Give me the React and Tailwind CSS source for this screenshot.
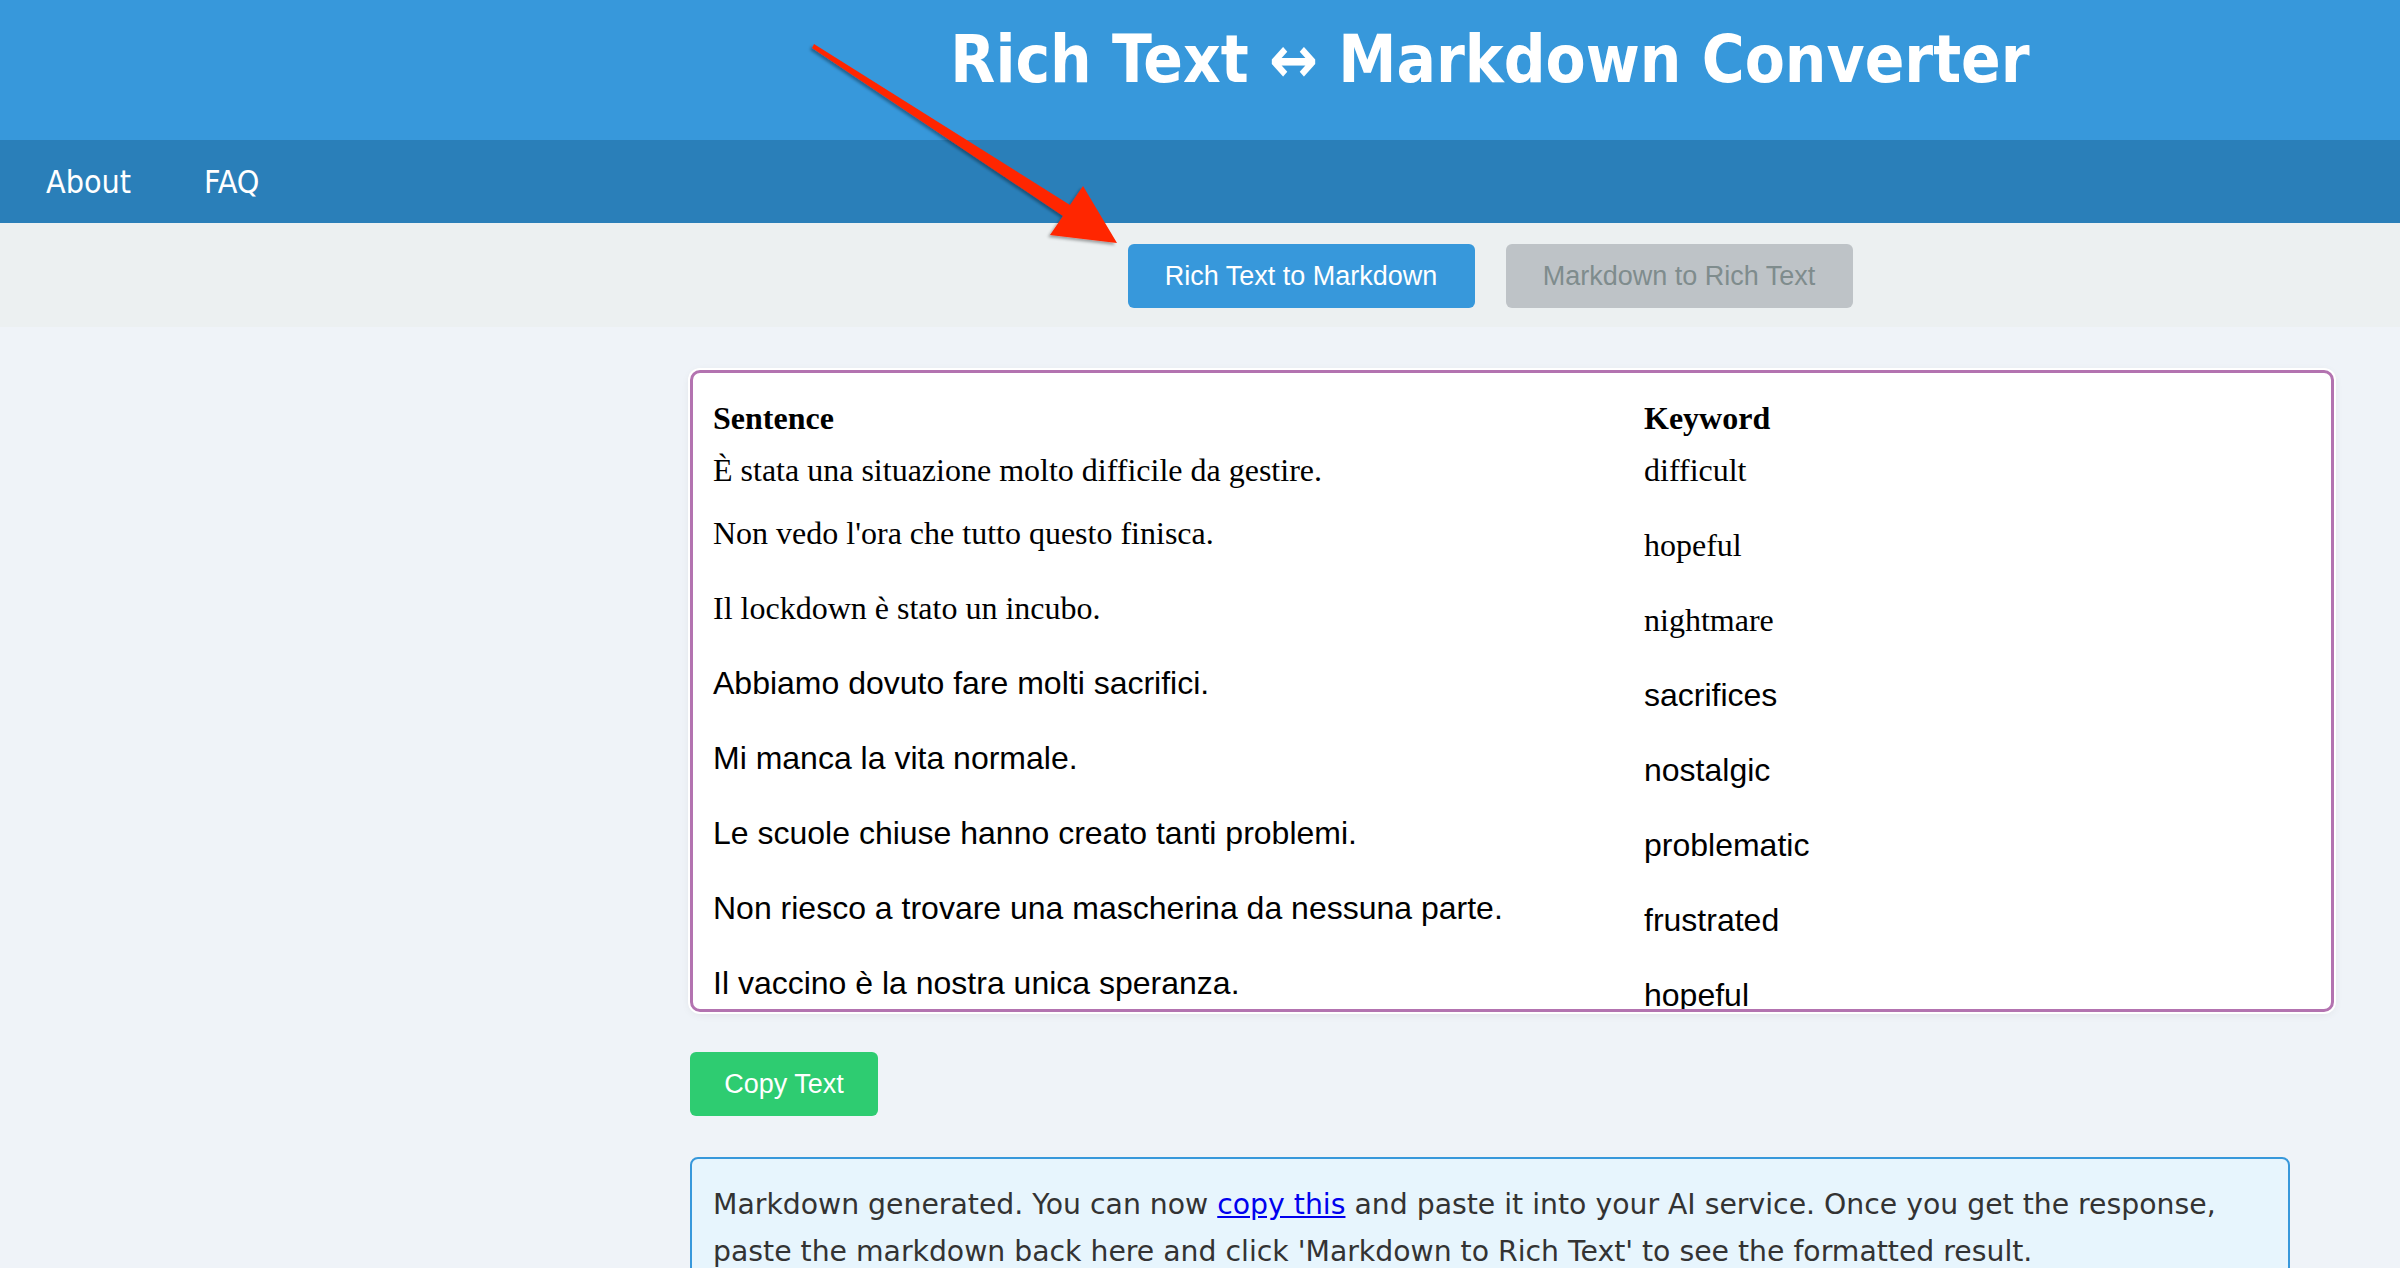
import React from 'react'

const rows = [
  { s: 'È stata una situazione molto difficile da gestire.', k: 'difficult', serif: true },
  { s: "Non vedo l'ora che tutto questo finisca.", k: 'hopeful', serif: true },
  { s: 'Il lockdown è stato un incubo.', k: 'nightmare', serif: true },
  { s: 'Abbiamo dovuto fare molti sacrifici.', k: 'sacrifices' },
  { s: 'Mi manca la vita normale.', k: 'nostalgic' },
  { s: 'Le scuole chiuse hanno creato tanti problemi.', k: 'problematic' },
  { s: 'Non riesco a trovare una mascherina da nessuna parte.', k: 'frustrated' },
  { s: 'Il vaccino è la nostra unica speranza.', k: 'hopeful' },
]

function Arrow() {
  return (
    <svg className="absolute left-0 top-0 pointer-events-none" width="2400" height="1268">
      <defs>
        <filter id="sh" x="-10%" y="-10%" width="120%" height="120%">
          <feDropShadow dx="-2" dy="2" stdDeviation="1.5" floodColor="#000" floodOpacity="0.35" />
        </filter>
      </defs>
      <polygon
        points="814,44 1070,205 1083,186 1117,243 1050,235 1063,216 812,48"
        fill="#ff2600"
        filter="url(#sh)"
      />
    </svg>
  )
}

export default function App() {
  const tahoma = "font-['DejaVu_Sans_Condensed','DejaVu_Sans',sans-serif]"
  const verdana = "font-['DejaVu_Sans',sans-serif]"
  const arial = "font-['Liberation_Sans',Arial,sans-serif]"
  const times = "font-['Liberation_Serif','Times_New_Roman',serif]"

  return (
    <div className={`relative min-h-screen bg-[#eff3f8] overflow-hidden ${tahoma}`}>
      {/* Header */}
      <header className="bg-[#3798db] h-[140px]">
        <div className="ml-[690px] w-[1600px] flex justify-center pt-[27px]">
          <h1 className="text-white font-bold text-[65px] leading-none">Rich Text ↔ Markdown Converter</h1>
        </div>
      </header>

      {/* Nav */}
      <nav className="bg-[#2a7fb9] h-[83px] flex items-center pl-[46px] gap-[73px] text-white text-[32px]">
        <span>About</span>
        <span>FAQ</span>
      </nav>

      {/* Mode tabs */}
      <div className="bg-[#ecf0f1] h-[104px]">
        <div className={`ml-[690px] w-[1600px] flex justify-center gap-[31px] pt-[21px] ${arial}`}>
          <button className="h-[64px] w-[347px] rounded-[6px] bg-[#3798db] text-white text-[27px]">
            Rich Text to Markdown
          </button>
          <button className="h-[64px] w-[347px] rounded-[6px] bg-[#bec3c7] text-[#7f8c8d] text-[27px]">
            Markdown to Rich Text
          </button>
        </div>
      </div>

      {/* Main */}
      <main className="ml-[690px] w-[1600px] pt-[43px]">
        <div className="w-[1644px] h-[642px] overflow-hidden bg-white border-[3px] border-[#b373b0] rounded-[10px] shadow-[0_0_0_2px_#fff,0_2px_10px_rgba(0,0,0,0.08)] pl-[20px] pt-[27px] text-black">
          <div className={`grid grid-cols-[931px_1fr] h-[52px] font-bold text-[32px] leading-[37px] ${times}`}>
            <div>Sentence</div>
            <div>Keyword</div>
          </div>
          {rows.map((r, i) => (
            <div
              key={i}
              className={`grid grid-cols-[931px_1fr] text-[32px] leading-[37px] ${r.serif ? times : arial} ${i === 0 ? 'h-[63px]' : 'h-[75px]'}`}
            >
              <div>{r.s}</div>
              <div className={i === 0 ? '' : 'pt-[12px]'}>{r.k}</div>
            </div>
          ))}
        </div>

        <button className={`mt-[40px] h-[64px] w-[188px] rounded-[6px] bg-[#2ecc71] text-white text-[27px] ${arial}`}>
          Copy Text
        </button>

        <div className={`mt-[41px] w-[1600px] bg-[#e7f5fd] border-2 border-[#3798db] rounded-[8px] pl-[21px] pr-[20px] pt-[22px] pb-[22px] text-[#333] text-[28.3px] leading-[47px] ${verdana}`}>
          Markdown generated. You can now <a href="#" className="text-[#0000ee] underline">copy this</a> and paste it into your AI service. Once you get the response, paste the markdown back here and click 'Markdown to Rich Text' to see the formatted result.
        </div>
      </main>

      <Arrow />
    </div>
  )
}
